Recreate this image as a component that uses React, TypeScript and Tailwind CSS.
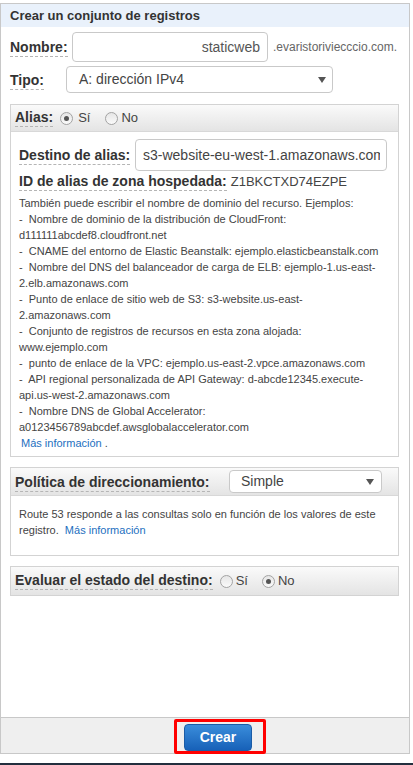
import React from "react";

const lab = "font-bold text-[14px] text-[#333] leading-[16px]";
const dashed = "border-b border-dashed border-[#b5b5b5] pb-[1px]";

const Radio = ({ checked }: { checked?: boolean }) => (
  <span className="w-[13px] h-[13px] rounded-full border border-[#a3a3a3] bg-linear-to-b from-[#e6e6e6] to-[#fafafa] flex items-center justify-center">
    {checked && <span className="w-[5px] h-[5px] rounded-full bg-[#555]" />}
  </span>
);

const Arrow = () => (
  <svg width="8" height="6" viewBox="0 0 8 6">
    <path d="M0 0h8L4 6z" fill="#555" />
  </svg>
);

const descLines = [
  "También puede escribir el nombre de dominio del recurso. Ejemplos:",
  "-\u00a0 Nombre de dominio de la distribución de CloudFront:",
  "d111111abcdef8.cloudfront.net",
  "-\u00a0 CNAME del entorno de Elastic Beanstalk: ejemplo.elasticbeanstalk.com",
  "-\u00a0 Nombre del DNS del balanceador de carga de ELB: ejemplo-1.us-east-",
  "2.elb.amazonaws.com",
  "-\u00a0 Punto de enlace de sitio web de S3: s3-website.us-east-",
  "2.amazonaws.com",
  "-\u00a0 Conjunto de registros de recursos en esta zona alojada:",
  "www.ejemplo.com",
  "-\u00a0 punto de enlace de la VPC: ejemplo.us-east-2.vpce.amazonaws.com",
  "-\u00a0 API regional personalizada de API Gateway: d-abcde12345.execute-",
  "api.us-west-2.amazonaws.com",
  "-\u00a0 Nombre DNS de Global Accelerator:",
  "a0123456789abcdef.awsglobalaccelerator.com",
];

export default function App() {
  return (
    <div className="w-[413px] h-[765px] bg-white flex flex-col font-['Liberation_Sans',Arial,sans-serif] text-[#333]">
      <div className="h-[3px]" />
      <div className="w-[410px] h-[751px] border border-[#c8c8c8] flex flex-col">
        {/* Header */}
        <div className="h-[23px] bg-[#e9f1fb] flex items-center pl-[9px]">
          <span className="font-bold text-[13px] text-[#333]">
            Crear un conjunto de registros
          </span>
        </div>

        <div className="flex-1 flex flex-col pl-[9px]">
          {/* Nombre */}
          <div className="flex items-center mt-[5px]">
            <div className="w-[62px]">
              <span className={`${lab} ${dashed}`}>Nombre:</span>
            </div>
            <div className="w-[196px] h-[30px] border border-[#c9c9c9] rounded-[4px] flex items-center justify-end pr-[7px] text-[14px] text-[#555]">
              staticweb
            </div>
            <span className="ml-[5px] text-[12px] text-[#666]">
              .evaristoriviecccio.com.
            </span>
          </div>

          {/* Tipo */}
          <div className="flex items-center mt-[4px]">
            <div className="w-[56px]">
              <span className={`${lab} ${dashed}`}>Tipo:</span>
            </div>
            <div className="w-[267px] h-[27px] border border-[#c9c9c9] rounded-[4px] flex items-center justify-between pl-[12px] pr-[6px] text-[14px] text-[#444]">
              <span>A: dirección IPv4</span>
              <Arrow />
            </div>
          </div>

          {/* Alias panel */}
          <div className="mt-[11px] w-[389px] border border-[#d3d3d3]">
            <div className="h-[27px] border-b border-[#d8d8d8] bg-linear-to-b from-[#fafafa] to-[#e4e4e4] flex items-center pl-[4px]">
              <span className={`${lab} ${dashed}`}>Alias:</span>
              <span className="ml-[7px]">
                <Radio checked />
              </span>
              <span className="ml-[5px] text-[13px] text-[#444]">Sí</span>
              <span className="ml-[15px]">
                <Radio />
              </span>
              <span className="ml-[3px] text-[13px] text-[#444]">No</span>
            </div>
            <div className="pl-[8px] pt-[7px] pb-[5px]">
              <div className="flex items-center">
                <div className="w-[116px]">
                  <span className={`${lab} ${dashed}`}>Destino de alias:</span>
                </div>
                <div className="w-[252px] h-[32px] border border-[#c9c9c9] rounded-[4px] flex items-center pl-[7px] text-[14px] text-[#444]">
                  <div className="w-[237px] overflow-hidden whitespace-nowrap">
                    s3-website-eu-west-1.amazonaws.com
                  </div>
                </div>
              </div>
              <div className="h-[20px] flex items-center mt-[1px]">
                <span className={`${lab} ${dashed}`}>
                  ID de alias de zona hospedada:
                </span>
                <span className="ml-[4px] text-[13px] text-[#444]">
                  Z1BKCTXD74EZPE
                </span>
              </div>
              <div className="mt-[3px] text-[11px] leading-[16px] text-[#444]">
                {descLines.map((l, i) => (
                  <div key={i} className="whitespace-nowrap">
                    {l}
                  </div>
                ))}
                <div className="ml-[2px]">
                  <span className="text-[#1d6fc0]">Más información</span> .
                </div>
              </div>
            </div>
          </div>

          {/* Politica panel */}
          <div className="mt-[10px] w-[389px] border border-[#d3d3d3]">
            <div className="h-[28px] border-b border-[#d8d8d8] bg-linear-to-b from-[#fafafa] to-[#e4e4e4] flex items-center pl-[4px]">
              <div className="w-[214px]">
                <span className={`${lab} ${dashed}`}>
                  Política de direccionamiento:
                </span>
              </div>
              <div className="w-[153px] h-[23px] bg-white border border-[#c9c9c9] rounded-[4px] flex items-center justify-between pl-[11px] pr-[7px] text-[14px] text-[#444]">
                <span>Simple</span>
                <Arrow />
              </div>
            </div>
            <div className="pl-[8px] pt-[10px] pb-[17px] text-[11px] leading-[16px] text-[#444]">
              <div className="whitespace-nowrap">
                Route 53 responde a las consultas solo en función de los valores de este
              </div>
              <div>
                registro.&nbsp; <span className="text-[#1d6fc0]">Más información</span>
              </div>
            </div>
          </div>

          {/* Evaluar panel */}
          <div className="mt-[10px] w-[389px] border border-[#d3d3d3]">
            <div className="h-[28px] bg-linear-to-b from-[#fafafa] to-[#e4e4e4] flex items-center pl-[4px]">
              <span className={`${lab} ${dashed}`}>
                Evaluar el estado del destino:
              </span>
              <span className="ml-[7px]">
                <Radio />
              </span>
              <span className="ml-[3px] text-[13px] text-[#444]">Sí</span>
              <span className="ml-[14px]">
                <Radio checked />
              </span>
              <span className="ml-[3px] text-[13px] text-[#444]">No</span>
            </div>
          </div>
        </div>

        {/* Footer */}
        <div className="relative h-[36px] border-t border-[#c8c8c8] bg-[#efefef] pl-[183px] pt-[6px]">
          <button className="w-[68px] h-[27px] rounded-[4px] border border-[#1b5ca6] bg-linear-to-b from-[#3a8ddb] to-[#1761b8] text-white text-[14px] font-bold">
            Crear
          </button>
          <div className="absolute left-[173px] top-[1px] w-[92px] h-[35px] border-[3px] border-[#ff0000] rounded-[2px]" />
        </div>
      </div>
      <div className="h-[9px]" />
      <div className="h-[2px] bg-[#232f3e]" />
    </div>
  );
}
